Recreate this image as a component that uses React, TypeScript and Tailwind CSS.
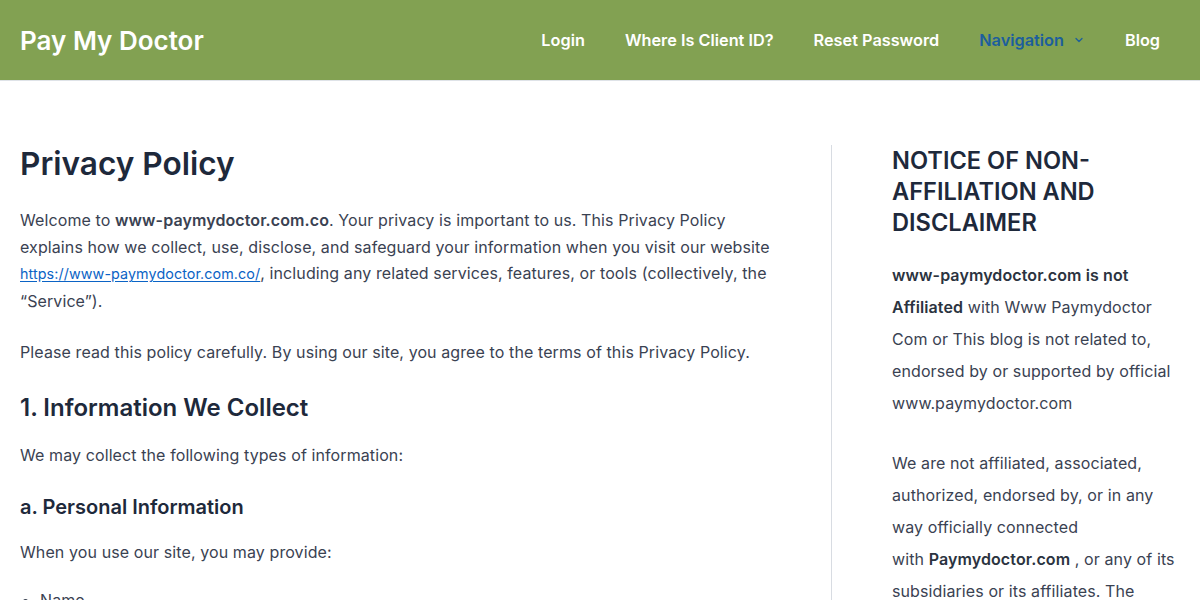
import { ChevronDown } from "lucide-react";

const font = { fontFamily: "Inter, 'Noto Sans', sans-serif" };

function Header() {
  const links = ["Login", "Where Is Client ID?", "Reset Password"];
  return (
    <header className="h-[81px] border-b border-[#dfe3e8] bg-[#82a152]">
      <div className="flex h-[80px] items-center justify-between px-5">
        <a className="text-[26px] font-semibold text-white">Pay My Doctor</a>
        <nav className="flex items-center text-[16.3px] font-semibold text-white">
          {links.map((l) => (
            <a key={l} className="px-5">
              {l}
            </a>
          ))}
          <a className="flex items-center gap-[9px] px-5 text-[#1c5e9d]">
            Navigation
            <ChevronDown size={12} strokeWidth={2.5} />
          </a>
          <a className="px-5">Blog</a>
        </nav>
      </div>
    </header>
  );
}

function Main() {
  return (
    <main className="w-[811px] shrink-0 pr-[60px] text-[16px] leading-[26.6px] tracking-[0.1px] text-[#3a4252]">
      <h1 className="mb-[25px] text-[31.6px] font-semibold leading-[37px] tracking-normal text-[#1e293b]">
        Privacy Policy
      </h1>
      <p className="mb-[25px]">
        Welcome to <strong className="font-semibold">www-paymydoctor.com.co</strong>. Your
        privacy is important to us. This Privacy Policy explains how we collect, use,
        disclose, and safeguard your information when you visit our website{" "}
        <a className="text-[14.3px] text-[#0b63c5] underline underline-offset-2">
          https://www-paymydoctor.com.co/
        </a>
        , including any related services, features, or tools (collectively, the “Service”).
      </p>
      <p className="mb-[26px]">
        Please read this policy carefully. By using our site, you agree to the terms of this
        Privacy Policy.
      </p>
      <h2 className="mb-[19px] text-[24px] font-semibold leading-[31px] tracking-normal text-[#1e293b]">
        1. Information We Collect
      </h2>
      <p className="mb-[25px]">We may collect the following types of information:</p>
      <h3 className="mb-[19px] text-[20px] font-semibold leading-[26px] tracking-normal text-[#1e293b]">
        a. Personal Information
      </h3>
      <p className="mb-[22px]">When you use our site, you may provide:</p>
      <ul className="list-disc pl-5">
        <li>Name</li>
        <li>Email address</li>
      </ul>
    </main>
  );
}

function Sidebar() {
  return (
    <aside className="flex-1 border-l border-[#d8dce2] pl-[60px] text-[16px] leading-[32px] tracking-[0.1px] text-[#3a4252]">
      <h2 className="mb-[21px] text-[23.6px] font-semibold leading-[31px] tracking-normal text-[#1e293b]">
        NOTICE OF NON-AFFILIATION AND DISCLAIMER
      </h2>
      <p className="mb-[28px]">
        <strong className="font-semibold text-[#2b3340]">
          www-paymydoctor.com is not Affiliated
        </strong>{" "}
        with Www Paymydoctor Com or This blog is not related to, endorsed by or supported by
        official www.paymydoctor.com
      </p>
      <p>
        We are not affiliated, associated, authorized, endorsed by, or in any way officially
        connected{" "}
        <span className="whitespace-nowrap">
          with <strong className="font-semibold text-[#2b3340]">Paymydoctor.com</strong>
        </span>{" "}
        , or any of its subsidiaries or its affiliates. The official website can be found at
        www.paymydoctor.com
      </p>
    </aside>
  );
}

export default function App() {
  return (
    <div className="h-[600px] overflow-hidden bg-white" style={font}>
      <Header />
      <div className="flex px-5 pt-16">
        <Main />
        <Sidebar />
      </div>
    </div>
  );
}
